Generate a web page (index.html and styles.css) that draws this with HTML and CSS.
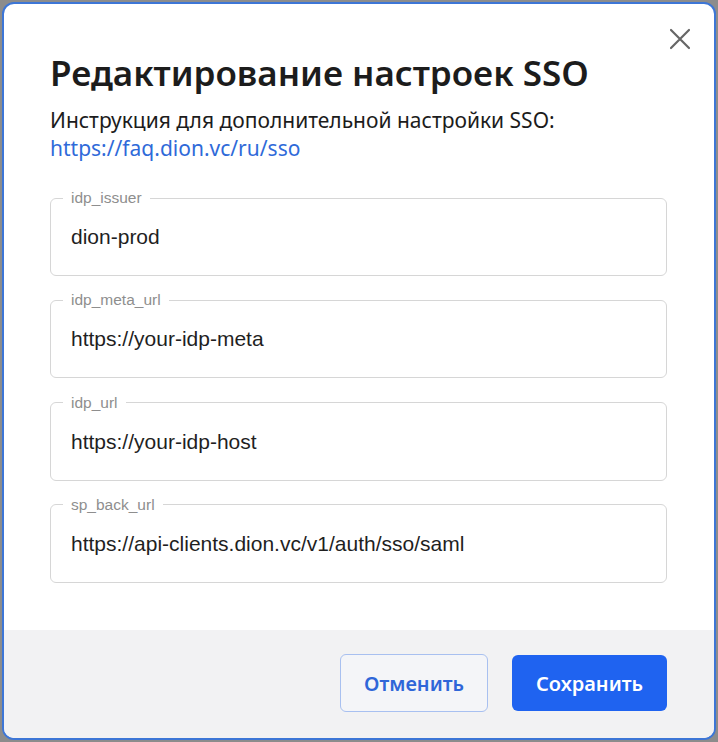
FILE: index.html
```html
<!DOCTYPE html>
<html lang="ru">
<head>
    <meta charset="UTF-8">
    <meta name="viewport" content="width=device-width, initial-scale=1.0">
    <title>Редактирование настроек SSO</title>
    <link rel="stylesheet" href="styles.css">
</head>
<body>
    <div class="modal">
        <div class="modal-body">
            <button class="close-btn" type="button" aria-label="Закрыть">
                <svg width="22" height="22" viewBox="0 0 22 22">
                    <path d="M2 2 L20 20 M20 2 L2 20" stroke="#666" stroke-width="2.2" stroke-linecap="round" fill="none"/>
                </svg>
            </button>
            <h1>Редактирование настроек SSO</h1>
            <p class="hint">
                Инструкция для дополнительной настройки SSO:<br>
                <a href="#">https://faq.dion.vc/ru/sso</a>
            </p>

            <form class="sso-form">
                <fieldset>
                    <legend>idp_issuer</legend>
                    <div class="value">dion-prod</div>
                </fieldset>
                <fieldset>
                    <legend>idp_meta_url</legend>
                    <div class="value">https://your-idp-meta</div>
                </fieldset>
                <fieldset>
                    <legend>idp_url</legend>
                    <div class="value">https://your-idp-host</div>
                </fieldset>
                <fieldset>
                    <legend>sp_back_url</legend>
                    <div class="value">https://api-clients.dion.vc/v1/auth/sso/saml</div>
                </fieldset>
            </form>
        </div>

        <div class="modal-footer">
            <button type="button" class="btn btn-cancel">Отменить</button>
            <button type="button" class="btn btn-save">Сохранить</button>
        </div>
    </div>
</body>
</html>
```

FILE: styles.css
```css
html, body {
    height: 100%;
}

body {
    margin: 0;
    padding: 2px;
    box-sizing: border-box;
    background: #8c8c8c;
    font-family: "Noto Sans", sans-serif;
}

.modal {
    height: 100%;
    box-sizing: border-box;
    display: flex;
    flex-direction: column;
    background: white;
    border: 2px solid #3d76d6;
    border-radius: 12px;
    overflow: hidden;
}

.modal-body {
    position: relative;
    flex: 1;
    padding: 47px 47px 0 46px;
}

.close-btn {
    position: absolute;
    top: 24px;
    right: 23px;
    padding: 0;
    border: none;
    background: none;
    cursor: pointer;
}

h1 {
    margin: 0;
    font-size: 35px;
    font-weight: 600;
    line-height: 44px;
    color: #1c1c1c;
}

.hint {
    margin: 11px 0 0;
    font-size: 21px;
    line-height: 28px;
    color: #1c1c1c;
}

.hint a {
    color: #2f6ad9;
    text-decoration: none;
}

.sso-form {
    margin-top: 27px;
    display: flex;
    flex-direction: column;
    gap: 15.3px;
}

fieldset {
    margin: 0;
    padding: 0 20px;
    height: 87px;
    box-sizing: border-box;
    border: 1px solid #d6d6d6;
    border-radius: 6px;
}

legend {
    margin-left: -8px;
    padding: 0 8px;
    font-family: "Liberation Sans", Arial, sans-serif;
    font-size: 15.5px;
    line-height: 18px;
    color: #8e8e8e;
}

.value {
    margin-top: 18px;
    font-family: "Liberation Sans", Arial, sans-serif;
    font-size: 21px;
    line-height: 24px;
    color: #1f1f1f;
}

.modal-footer {
    height: 108px;
    box-sizing: border-box;
    background: #f2f2f3;
    display: flex;
    justify-content: flex-end;
    align-items: center;
    gap: 24px;
    padding: 0 47px 2px 0;
}

.btn {
    height: 58px;
    padding: 0;
    border-radius: 6px;
    font-family: "Noto Sans", sans-serif;
    font-size: 20px;
    font-weight: 600;
    cursor: pointer;
}

.btn-cancel {
    width: 148px;
    background: #f4f5f8;
    border: 1px solid #a8c0f0;
    color: #2f66d8;
}

.btn-save {
    width: 155px;
    height: 56px;
    background: #1f63f0;
    border: none;
    color: white;
}
```
